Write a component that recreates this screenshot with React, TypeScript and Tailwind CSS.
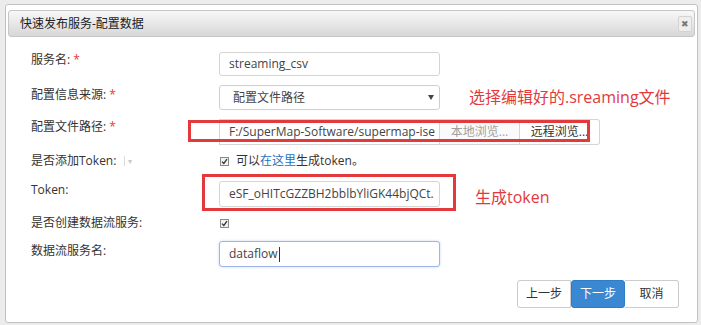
import React from 'react';

const FONT = { fontFamily: '"Open Sans", "Noto Sans CJK SC", sans-serif' };

function Label({ children, required, pt }: { children: React.ReactNode; required?: boolean; pt: string }) {
  return (
    <div className={'w-[211px] shrink-0 pl-[23px] text-[12px] leading-[14px] text-[#333] ' + pt}>
      {children}
      {required && <span className="text-[#e4393c]"> *</span>}
    </div>
  );
}

function TextBox({ value, focused, h }: { value: string; focused?: boolean; h: string }) {
  return (
    <div
      className={
        'flex w-[221px] items-center overflow-hidden whitespace-nowrap rounded-[3px] border bg-white px-[9px] text-[12px] text-[#444] ' +
        h +
        (focused ? ' border-[#9cb4ea] shadow-[0_0_3px_#c9d8f6]' : ' border-[#d5d5d5]')
      }
    >
      <span>{value}</span>
      {focused && <span className="ml-px h-[15px] w-px shrink-0 bg-[#333]" />}
    </div>
  );
}

function Check() {
  return (
    <span className="flex h-[9px] w-[9px] items-center justify-center border border-[#8a8a8a] bg-[#f1f1f1]">
      <svg width="7" height="7" viewBox="0 0 7 7">
        <path d="M1 3.6 L2.8 5.4 L6 1.2" fill="none" stroke="#333" strokeWidth="1.3" />
      </svg>
    </span>
  );
}

export default function App() {
  return (
    <div className="h-[325px] w-[701px] overflow-hidden bg-[#ececec] pl-[5px] pt-[4px]" style={FONT}>
      <div className="flex h-[319px] w-[693px] flex-col rounded-[3px] border border-[#c2c2c2] bg-white px-[2px] pt-[5px]">
        {/* title bar */}
        <div className="flex h-[27px] shrink-0 items-center justify-between rounded-[3px] border border-[#c6c6c6] bg-gradient-to-b from-[#f8f8f8] to-[#d7d7d7] pl-[11px] pr-[2px]">
          <span className="text-[12px] text-[#222]">快速发布服务-配置数据</span>
          <span className="flex h-[16px] w-[14px] items-center justify-center rounded-[2px] border border-[#d3d3d3] bg-[#eeeeee] text-[9px] leading-none text-[#777]">
            ✖
          </span>
        </div>

        <div className="flex flex-col">
          {/* 服务名 */}
          <div className="mt-[15px] flex h-[24px] items-start">
            <Label required pt="pt-[1px]">服务名:</Label>
            <TextBox value="streaming_csv" h="h-[24px]" />
          </div>

          {/* 配置信息来源 */}
          <div className="mt-[9px] flex h-[25px] items-start">
            <Label required pt="pt-[3px]">配置信息来源:</Label>
            <div className="flex h-[25px] w-[221px] items-center justify-between rounded-[3px] border border-[#cfcfcf] bg-white pl-[13px] pr-[5px] text-[12px] text-[#444]">
              <span>配置文件路径</span>
              <svg width="6" height="5" viewBox="0 0 6 5">
                <path d="M0 0 H6 L3 5 Z" fill="#444" />
              </svg>
            </div>
            <span className="ml-[29px] mt-[2px] whitespace-nowrap text-[16px] leading-[20px] text-[#e4393c]">
              选择编辑好的.sreaming文件
            </span>
          </div>

          {/* 配置文件路径 */}
          <div className="relative mt-[9px] flex h-[26px] items-start">
            <Label required pt="pt-[1px]">配置文件路径:</Label>
            <div className="flex h-[26px] items-stretch">
              <div className="flex w-[221px] items-center overflow-hidden whitespace-nowrap border border-[#d5d5d5] px-[9px] text-[12px] text-[#444]">
                <span>F:/SuperMap-Software/supermap-ise</span>
              </div>
              <div className="flex w-[80px] items-center justify-center border border-l-0 border-[#d5d5d5] bg-[#fafafa] text-[12px] text-[#a0a0a0]">
                本地浏览...
              </div>
              <div className="flex w-[80px] items-center justify-center rounded-r-[3px] border border-l-0 border-[#d5d5d5] bg-white text-[12px] text-[#333]">
                远程浏览...
              </div>
            </div>
            <div className="absolute left-[180px] top-[1px] h-[22px] w-[402px] border-[3px] border-[#e4393c]" />
          </div>

          {/* 是否添加Token */}
          <div className="mt-[8px] flex h-[16px] items-center">
            <div className="flex w-[211px] shrink-0 items-center pl-[23px] text-[12px] text-[#333]">
              是否添加Token:
              <span className="ml-[8px] flex items-center gap-[3px] text-[#c8c8c8]">
                <span className="h-[10px] w-px bg-[#dcdcdc]" />
                <span className="text-[8px] leading-none">▾</span>
              </span>
            </div>
            <div className="ml-px flex items-center gap-[7px] text-[12px] text-[#333]">
              <Check />
              <span>
                可以<span className="text-[#1e6fc1]">在这里</span>生成token。
              </span>
            </div>
          </div>

          {/* Token */}
          <div className="relative mt-[12px] flex h-[26px] items-start">
            <Label pt="pt-[2px]">Token:</Label>
            <TextBox value="eSF_oHITcGZZBH2bblbYliGK44bjQCt." h="h-[26px]" />
            <span className="ml-[35px] mt-[6px] whitespace-nowrap text-[16px] leading-[20px] text-[#e4393c]">
              生成token
            </span>
            <div className="absolute left-[194px] top-[-7px] h-[37px] w-[254px] border-[3px] border-[#e4393c]" />
          </div>

          {/* 是否创建数据流服务 */}
          <div className="mt-[8px] flex h-[16px] items-center">
            <Label pt="pt-0">是否创建数据流服务:</Label>
            <div className="ml-px flex items-center">
              <Check />
            </div>
          </div>

          {/* 数据流服务名 */}
          <div className="mt-[10px] flex h-[26px] items-start">
            <Label pt="pt-[3px]">数据流服务名:</Label>
            <TextBox value="dataflow" focused h="h-[26px]" />
          </div>

          {/* buttons */}
          <div className="mt-[13px] flex justify-end pr-[16px]">
            <div className="flex h-[28px] text-[12px]">
              <span className="flex w-[54px] items-center justify-center rounded-l-[3px] border border-[#cccccc] bg-white text-[#333]">
                上一步
              </span>
              <span className="flex w-[54px] items-center justify-center rounded-[3px] border border-[#2f7dc4] bg-[#3a88d2] text-white">
                下一步
              </span>
              <span className="flex w-[54px] items-center justify-center rounded-r-[3px] border border-l-0 border-[#cccccc] bg-white text-[#333]">
                取消
              </span>
            </div>
          </div>
        </div>
      </div>
    </div>
  );
}
